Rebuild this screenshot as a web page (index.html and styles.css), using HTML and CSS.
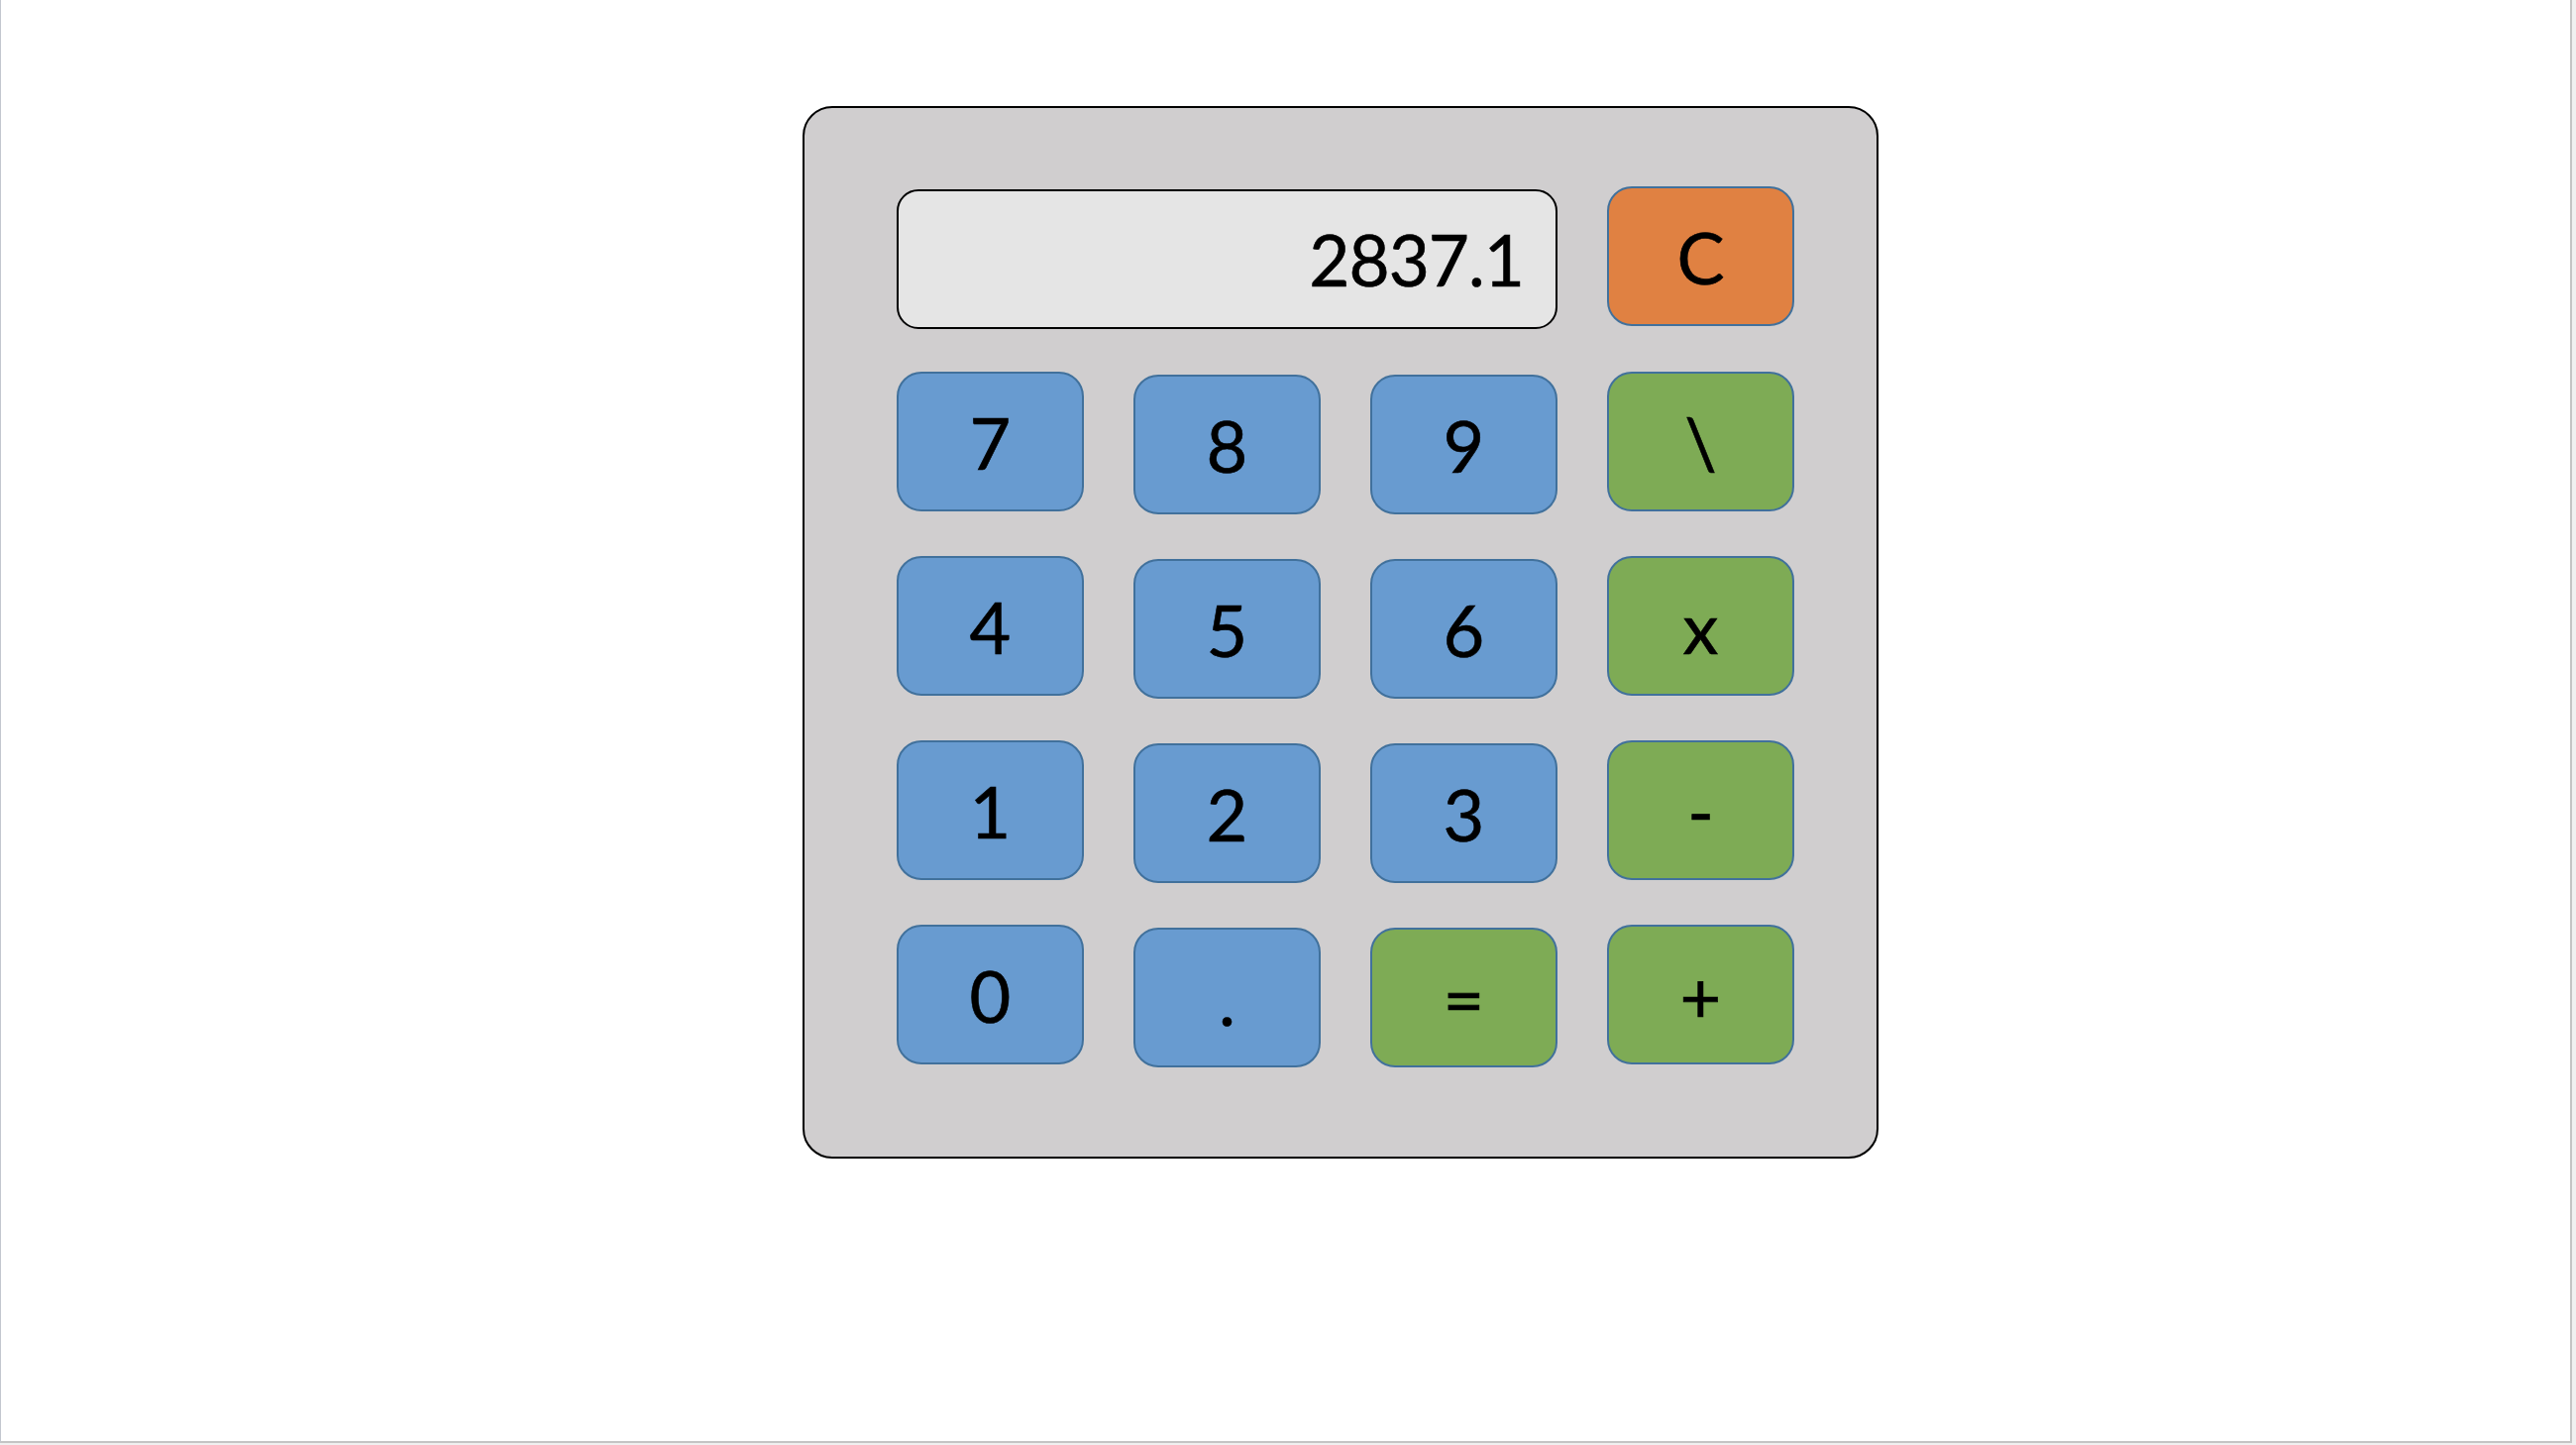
FILE: index.html
```html
<!DOCTYPE html>
<html lang="en">
<head>
<meta charset="utf-8">
<title>Calculator</title>
<link rel="stylesheet" href="styles.css">
</head>
<body>
<div class="slide">
  <div class="calc">
    <div class="display nudge-down">2837.1</div>
    <button class="key key-clear nudge-up">C</button>

    <button class="key key-num">7</button>
    <button class="key key-num nudge">8</button>
    <button class="key key-num nudge">9</button>
    <button class="key key-op">\</button>

    <button class="key key-num">4</button>
    <button class="key key-num nudge">5</button>
    <button class="key key-num nudge">6</button>
    <button class="key key-op">x</button>

    <button class="key key-num">1</button>
    <button class="key key-num nudge">2</button>
    <button class="key key-num nudge">3</button>
    <button class="key key-op">-</button>

    <button class="key key-num">0</button>
    <button class="key key-num nudge">.</button>
    <button class="key key-op nudge">=</button>
    <button class="key key-op">+</button>
  </div>
</div>
</body>
</html>
```

FILE: styles.css
```css
html, body {
  margin: 0;
  padding: 0;
  background: #f0f0f0;
}

.slide {
  box-sizing: border-box;
  width: 2596px;
  height: 1456px;
  background: #ffffff;
  border-left: 1px solid #c3c7cf;
  border-right: 2px solid #c4c4c4;
  border-bottom: 2px solid #c4c4c4;
  padding: 107px 0 0 809px;
  display: flex;
  align-items: flex-start;
}

.calc {
  box-sizing: border-box;
  width: 1086px;
  height: 1062px;
  background: #d0cecf;
  border: 2px solid #000000;
  border-radius: 30px;
  padding: 80px 83px 0 93px;
  display: grid;
  grid-template-columns: repeat(4, 189px);
  grid-template-rows: repeat(5, 141px);
  column-gap: 50px;
  row-gap: 45px;
  align-content: start;
  font-family: Lato, "Open Sans", sans-serif;
}

.display {
  grid-column: 1 / span 3;
  box-sizing: border-box;
  height: 141px;
  background: #e5e5e5;
  border: 2px solid #000000;
  border-radius: 22px;
  display: flex;
  align-items: center;
  justify-content: flex-end;
  padding-right: 32px;
  font-size: 71px;
  color: #000000;
  line-height: 1;
  letter-spacing: -1px;
  -webkit-text-stroke: 0.6px #000000;
}

.key {
  box-sizing: border-box;
  height: 141px;
  margin: 0;
  padding: 0;
  border: 2px solid #41719c;
  border-radius: 25px;
  font-family: Lato, "Open Sans", sans-serif;
  font-size: 72px;
  line-height: 1;
  color: #000000;
  -webkit-text-stroke: 0.6px #000000;
  display: flex;
  align-items: center;
  justify-content: center;
}

.key-num {
  background: #689bd0;
}

.key-op {
  background: #7eab55;
}

.key-clear {
  background: #e08142;
}

.nudge {
  margin-top: 3px;
  margin-bottom: -3px;
}

.nudge-down {
  margin-top: 2px;
  margin-bottom: -2px;
}

.nudge-up {
  margin-top: -1px;
  margin-bottom: 1px;
}
```
